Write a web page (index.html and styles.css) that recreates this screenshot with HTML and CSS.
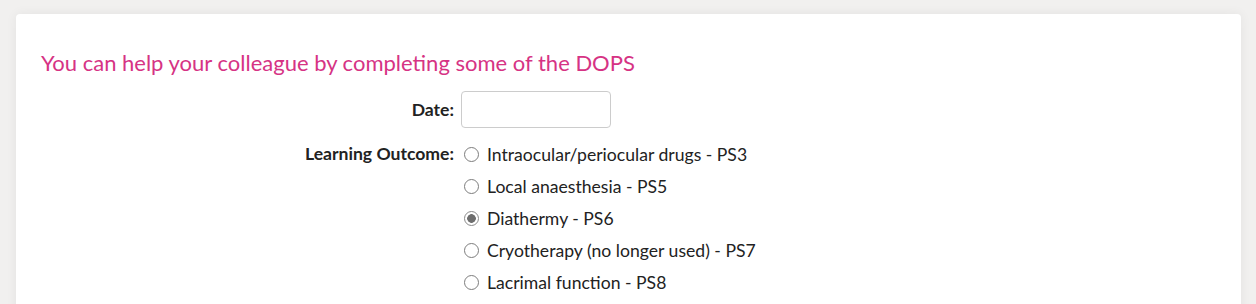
FILE: index.html
```html
<!DOCTYPE html>
<html>
<head>
<meta charset="utf-8">
<link rel="stylesheet" href="styles.css">
</head>
<body>
<div class="card">
  <h3 class="title">You can help your colleague by completing some of the DOPS</h3>
  <div class="form">
    <div class="row">
      <label class="lbl" for="d">Date:</label>
      <div class="field"><input id="d" class="date" type="text"></div>
    </div>
    <div class="row">
      <div class="lbl lbl-radio">Learning Outcome:</div>
      <div class="field options">
        <label class="opt"><input type="radio" name="lo"><span>Intraocular/periocular drugs - PS3</span></label>
        <label class="opt"><input type="radio" name="lo"><span>Local anaesthesia - PS5</span></label>
        <label class="opt"><input type="radio" name="lo" checked><span>Diathermy - PS6</span></label>
        <label class="opt"><input type="radio" name="lo"><span>Cryotherapy (no longer used) - PS7</span></label>
        <label class="opt"><input type="radio" name="lo"><span>Lacrimal function - PS8</span></label>
      </div>
    </div>
  </div>
</div>
</body>
</html>
```
FILE: styles.css
```css
html, body {
  margin: 0;
  padding: 0;
  background: #f1f0ef;
  font-family: Lato, "Liberation Sans", sans-serif;
  color: #222;
}
.card {
  margin: 14px 15px 0 16px;
  background: #fff;
  border-radius: 4px;
  box-shadow: 0 0 12px rgba(0,0,0,0.06);
  padding: 36px 25px 40px 25px;
  min-height: 400px;
}
.title {
  margin: 0 0 15px 0;
  font-weight: 400;
  font-size: 22px;
  line-height: 26px;
  color: #d63384;
}
.row {
  display: grid;
  grid-template-columns: 413px 1fr;
  column-gap: 7px;
  margin-bottom: 10px;
}
.lbl {
  text-align: right;
  font-weight: 700;
  font-size: 17.6px;
  line-height: 37px;
  color: #222;
}
.lbl-radio {
  line-height: 32px;
}
.date {
  box-sizing: border-box;
  width: 150px;
  height: 37px;
  border: 1px solid #ccc;
  border-radius: 4px;
  margin: 0;
  font: inherit;
  padding: 4px 8px;
}
.options {
  display: flex;
  flex-direction: column;
}
.opt {
  display: flex;
  align-items: center;
  height: 32px;
  font-size: 17.6px;
  color: #222;
}
.opt input {
  -webkit-appearance: none;
  appearance: none;
  box-sizing: border-box;
  width: 15px;
  height: 15px;
  margin: 0 8px 0 3px;
  border: 1px solid #7d7d7d;
  border-radius: 50%;
  background: #fff;
  flex: none;
}
.opt input:checked {
  border-color: #8a8a8a;
  background: radial-gradient(circle, #6e6e6e 0 4px, #fff 4.6px);
}
```
